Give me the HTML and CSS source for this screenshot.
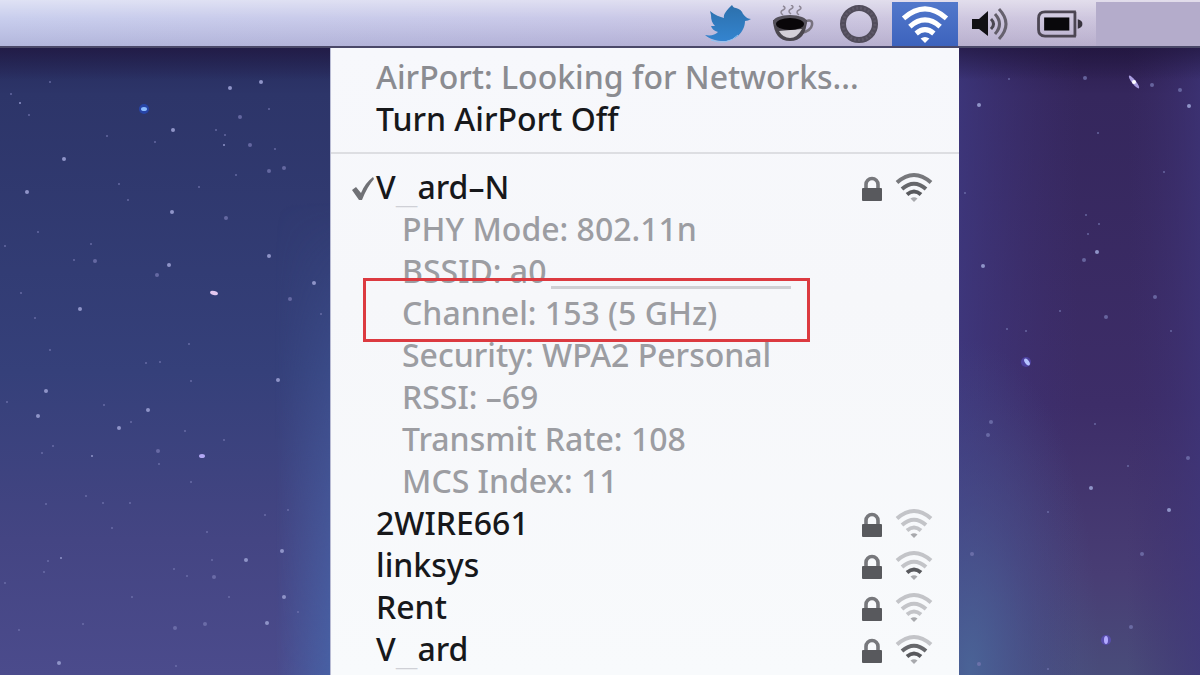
FILE: index.html
```
<!DOCTYPE html>
<html lang="en">
<head>
<meta charset="utf-8">
<title>AirPort menu</title>
<link rel="stylesheet" href="styles.css">
</head>
<body>
<svg class="sky" viewBox="0 0 1200 675" preserveAspectRatio="xMidYMid slice" aria-hidden="true">
  <defs>
    <linearGradient id="left" x1="0" y1="0" x2="0" y2="1"><stop offset="0.07" stop-color="#252a5c"/><stop offset="0.14" stop-color="#2d3569"/><stop offset="0.55" stop-color="#35407a"/><stop offset="0.8" stop-color="#444583"/><stop offset="1" stop-color="#4b4b8c"/></linearGradient>
    <linearGradient id="right" x1="0" y1="0" x2="0" y2="1"><stop offset="0.07" stop-color="#2a1c4c"/><stop offset="0.14" stop-color="#35275d"/><stop offset="0.6" stop-color="#3d2d68"/><stop offset="0.85" stop-color="#483d74"/><stop offset="1" stop-color="#494c7a"/></linearGradient>
    <linearGradient id="edge" x1="0" y1="0" x2="1" y2="0"><stop offset="0" stop-color="#4764a8" stop-opacity="0"/><stop offset="1" stop-color="#4764a8"/></linearGradient>
    <linearGradient id="blue" x1="0" y1="0" x2="1" y2="0"><stop offset="0" stop-color="#3f3b85" stop-opacity="0.7"/><stop offset="0.5" stop-color="#3f3176" stop-opacity="0"/><stop offset="0.7" stop-color="#3c2d6c" stop-opacity="0"/><stop offset="1" stop-color="#3e357a" stop-opacity="0.7"/></linearGradient>
    <linearGradient id="shade" x1="0" y1="0" x2="0" y2="1"><stop offset="0" stop-color="#20153c" stop-opacity="0.7"/><stop offset="1" stop-color="#20153c" stop-opacity="0"/></linearGradient>
    <linearGradient id="fade" x1="0" y1="0" x2="0" y2="1"><stop offset="0.3" stop-color="#000"/><stop offset="1" stop-color="#fff"/></linearGradient>
    <mask id="low"><rect width="1200" height="675" fill="url(#fade)"/></mask>
    <radialGradient id="teal"><stop offset="0" stop-color="#4b6799" stop-opacity="0.9"/><stop offset="0.5" stop-color="#4b5f95" stop-opacity="0.4"/><stop offset="1" stop-color="#4a5a90" stop-opacity="0"/></radialGradient>
  </defs>
  <rect width="640" height="675" fill="url(#left)"/>
  <rect x="640" width="560" height="675" fill="url(#right)"/>
  <rect x="958" width="242" height="675" fill="url(#blue)"/>
  <rect y="46" width="1200" height="34" fill="url(#shade)"/>
  <rect x="275" width="65" height="675" fill="url(#edge)" mask="url(#low)"/>
  <ellipse cx="970" cy="670" rx="130" ry="330" fill="url(#teal)"/>
  <g fill="#7678b2" opacity="0.75">
    <circle cx="11" cy="94" r="1"/><circle cx="29" cy="115" r="1"/><circle cx="50" cy="82" r="1"/><circle cx="107" cy="136" r="1"/><circle cx="155" cy="142" r="1"/><circle cx="216" cy="130" r="1"/><circle cx="225" cy="135" r="1"/><circle cx="250" cy="145" r="2"/><circle cx="240" cy="117" r="2"/><circle cx="269" cy="109" r="1"/><circle cx="275" cy="149" r="1"/><circle cx="269" cy="171" r="2"/><circle cx="284" cy="168" r="2"/><circle cx="236" cy="175" r="1"/><circle cx="199" cy="187" r="1"/><circle cx="119" cy="184" r="1"/><circle cx="128" cy="200" r="1"/><circle cx="226" cy="218" r="2"/><circle cx="38" cy="232" r="1"/><circle cx="5" cy="246" r="1"/><circle cx="91" cy="244" r="1"/><circle cx="74" cy="260" r="1"/><circle cx="95" cy="261" r="2"/><circle cx="157" cy="275" r="2"/><circle cx="21" cy="293" r="1"/><circle cx="35" cy="318" r="1"/><circle cx="290" cy="299" r="2"/><circle cx="321" cy="314" r="1"/><circle cx="189" cy="344" r="1"/><circle cx="160" cy="362" r="1"/><circle cx="50" cy="350" r="1"/><circle cx="146" cy="363" r="1"/><circle cx="191" cy="381" r="1"/><circle cx="104" cy="405" r="1"/><circle cx="185" cy="431" r="1"/><circle cx="224" cy="440" r="1"/><circle cx="131" cy="422" r="1"/><circle cx="7" cy="402" r="1"/><circle cx="53" cy="446" r="1"/><circle cx="42" cy="453" r="1"/><circle cx="158" cy="451" r="2"/><circle cx="159" cy="464" r="1"/><circle cx="191" cy="482" r="1"/><circle cx="86" cy="496" r="1"/><circle cx="103" cy="503" r="1"/><circle cx="130" cy="503" r="1"/><circle cx="46" cy="504" r="1"/><circle cx="112" cy="528" r="1"/><circle cx="207" cy="532" r="1"/><circle cx="265" cy="515" r="1"/><circle cx="288" cy="510" r="1"/><circle cx="48" cy="561" r="1"/><circle cx="44" cy="572" r="1"/><circle cx="212" cy="560" r="1"/><circle cx="174" cy="569" r="1"/><circle cx="187" cy="576" r="1"/><circle cx="214" cy="577" r="2"/><circle cx="5" cy="583" r="1"/><circle cx="132" cy="597" r="1"/><circle cx="229" cy="597" r="1"/><circle cx="83" cy="624" r="1"/><circle cx="175" cy="628" r="2"/><circle cx="205" cy="624" r="2"/><circle cx="19" cy="630" r="1"/><circle cx="298" cy="612" r="1"/><circle cx="176" cy="666" r="1"/>
    <circle cx="1009" cy="79" r="1"/><circle cx="1085" cy="78" r="2"/><circle cx="1152" cy="85" r="2"/><circle cx="1180" cy="90" r="2"/><circle cx="1098" cy="133" r="1"/><circle cx="1164" cy="172" r="1"/><circle cx="965" cy="193" r="1"/><circle cx="1086" cy="215" r="1"/><circle cx="1099" cy="224" r="1"/><circle cx="1088" cy="234" r="1"/><circle cx="1084" cy="260" r="2"/><circle cx="1155" cy="297" r="2"/><circle cx="1106" cy="317" r="2"/><circle cx="1060" cy="311" r="1"/><circle cx="1007" cy="329" r="1"/><circle cx="1026" cy="331" r="1"/><circle cx="1171" cy="331" r="1"/><circle cx="991" cy="422" r="2"/><circle cx="988" cy="435" r="2"/><circle cx="1095" cy="424" r="1"/><circle cx="1128" cy="466" r="1"/><circle cx="1188" cy="458" r="2"/><circle cx="1048" cy="512" r="1"/><circle cx="972" cy="554" r="2"/><circle cx="1142" cy="554" r="2"/><circle cx="1131" cy="627" r="2"/><circle cx="979" cy="664" r="2"/><circle cx="1048" cy="669" r="1"/>
  </g>
  <g fill="#8f94c8">
    <circle cx="20" cy="103" r="1"/><circle cx="173" cy="130" r="2"/><circle cx="230" cy="88" r="2"/><circle cx="261" cy="82" r="2"/><circle cx="224" cy="145" r="1"/><circle cx="64" cy="159" r="2"/><circle cx="27" cy="192" r="2"/><circle cx="172" cy="212" r="2"/><circle cx="169" cy="265" r="2"/><circle cx="269" cy="256" r="2"/><circle cx="314" cy="283" r="2"/><circle cx="80" cy="309" r="2"/><circle cx="278" cy="380" r="2"/><circle cx="46" cy="391" r="2"/><circle cx="38" cy="416" r="2"/><circle cx="148" cy="410" r="2"/><circle cx="119" cy="428" r="2"/><circle cx="92" cy="456" r="1"/><circle cx="61" cy="558" r="1"/><circle cx="246" cy="560" r="2"/><circle cx="282" cy="551" r="2"/><circle cx="284" cy="597" r="2"/><circle cx="267" cy="623" r="2"/><circle cx="59" cy="663" r="2"/>
    <circle cx="979" cy="105" r="2"/><circle cx="1189" cy="106" r="2"/><circle cx="983" cy="266" r="2"/><circle cx="1097" cy="252" r="2"/><circle cx="1091" cy="488" r="2"/><circle cx="1169" cy="510" r="2"/>
  </g>
  <circle cx="144" cy="109" r="5" fill="#2549b5" opacity="0.8"/><ellipse cx="144" cy="109" rx="3" ry="2" fill="#8bbcff"/>
  <ellipse cx="214" cy="293" rx="4" ry="2" fill="#e3c7ee" transform="rotate(15 214 293)"/>
  <ellipse cx="202" cy="456" rx="3" ry="2" fill="#b3a8f4"/>
  <ellipse cx="1134" cy="82" rx="8" ry="2" fill="#a99de0" transform="rotate(52 1134 82)"/><circle cx="1134" cy="82" r="2" fill="#fff"/>
  <circle cx="1026" cy="362" r="5" fill="#594fc0" opacity="0.6"/><ellipse cx="1027" cy="362" rx="4" ry="2" fill="#b5c3ff" transform="rotate(55 1027 362)"/>
  <circle cx="1106" cy="640" r="5" fill="#6252d0" opacity="0.6"/><ellipse cx="1106" cy="640" rx="2" ry="4" fill="#b2aaff"/>
</svg>

<svg class="symbols" aria-hidden="true">
  <symbol id="lock" viewBox="0 0 20 26"><path d="M4 13V8.500a6 6 0 0 1 12 0V13" fill="none" stroke="#77787c" stroke-width="3.600"/><rect x="0" y="12" width="20" height="13" rx="1" fill="#58595d"/></symbol>
  <symbol id="wifi" viewBox="0 0 38 30"><g fill="none" stroke-width="4"><path class="far" d="M2 10.500Q19-4.500 36 10.500"/><path class="mid" d="M7 17Q19 6.500 31 17"/><path class="near" d="M12 22.500Q19 16.500 26 22.500"/></g><path class="dot" d="M19 30l-3.500-3.500q3.500-2.500 7 0z"/></symbol>
</svg>

<header class="menubar">
  <button class="status" aria-label="Twitter"><svg width="48" height="40" viewBox="0 0 48 40"><defs><linearGradient id="bird" x1="0" y1="0" x2="0" y2="1"><stop offset="0" stop-color="#2c70ac"/><stop offset="1" stop-color="#3484cf"/></linearGradient></defs><path d="M2 31c6 1 10 0 13-3-4-1-6-3-7-6h4c-3-3-4-6-4-11l-1-4c5 4 10 6 14 7-1-4 3-8 8-13 1 2 2 3 4 3 4 1 6 3 7 6 2 2 4 5 8 5-2 1-4 2-6 2 0 11-10 20-21 20-8 0-14-2-19-6z" fill="url(#bird)"/><path d="M8 36q16 6 27-5" fill="none" stroke="#8fc3f4" stroke-width="1"/></svg></button>
  <button class="status" aria-label="Caffeine"><svg width="44" height="38" viewBox="0 0 44 38"><g fill="none" stroke="#8d8795" stroke-width="1.500"><path d="M12 10q-4-3 0-5t0-4M20 9q-4-3 0-5t0-4M28 10q-4-3 0-5t0-4"/></g><path d="M35 16q7-2 6 4t-11 8" fill="none" stroke="#77727e" stroke-width="2.500"/><path d="M2 15q1 21 17 21T36 15z" fill="#4b474f"/><path d="M8 26q4 7 11 7t12-9z" fill="#d4d0d8"/><ellipse cx="19" cy="17" rx="17" ry="7" fill="#55515b"/><ellipse cx="19" cy="19" rx="14" ry="6" fill="#090609"/></svg></button>
  <button class="status" aria-label="Sync"><svg width="40" height="40" viewBox="0 0 40 40"><circle cx="20" cy="20" r="16" fill="none" stroke="#514c5b" stroke-width="6"/><circle cx="20" cy="20" r="16" fill="none" stroke="#5e5868" stroke-width="3" stroke-dasharray="2 2"/></svg></button>
  <button class="status status-open" aria-label="AirPort" aria-expanded="true"><svg class="signal white" width="48" height="38"><use href="#wifi"/></svg></button>
  <button class="status" aria-label="Volume"><svg width="40" height="36" viewBox="0 0 40 36"><path d="M1 13h7l9-8v25l-9-7H1z" fill="#111014"/><g fill="none" stroke-width="3"><path d="M20 13q5 5 0 10" stroke="#4b4751"/><path d="M24 8q9 10 0 20" stroke="#625d69"/><path d="M28 3q14 15 0 30" stroke="#66616e"/></g></svg></button>
  <button class="status battery" aria-label="Battery"><svg width="48" height="28" viewBox="0 0 50 30"><path d="M42 2H9Q2 2 2 9v12q0 7 7 7h33M41 2v26" fill="none" stroke="#4c4653" stroke-width="3"/><rect x="8" y="8" width="27" height="14" fill="#09080b"/><path d="M44 10q5 1 5 5t-5 5z" fill="#38333e"/></svg></button>
  <div class="blank"></div>
</header>

<main class="desktop">
  <nav class="menu" aria-label="AirPort menu">
    <p class="row info">AirPort: Looking for Networks...</p>
    <button class="row">Turn AirPort Off</button>
    <hr>
    <button class="row"><svg class="check" width="24" height="26" viewBox="0 0 24 26"><path d="M1 15l4-3 5 6Q14 8 22 2l1 2q-7 8-12 21H8z" fill="#707176"/></svg><span class="name">V<span class="under">_</span>ard–N</span><svg class="lock" width="20" height="26"><use href="#lock"/></svg><svg class="signal s3" width="38" height="30"><use href="#wifi"/></svg></button>
    <p class="row detail">PHY Mode: 802.11n</p>
    <p class="row detail">BSSID: a0<span class="mask"></span></p>
    <p class="row detail marked">Channel: 153 (5 GHz)</p>
    <p class="row detail">Security: WPA2 Personal</p>
    <p class="row detail">RSSI: –69</p>
    <p class="row detail">Transmit Rate: 108</p>
    <p class="row detail">MCS Index: 11</p>
    <button class="row"><span class="name">2WIRE661</span><svg class="lock" width="20" height="26"><use href="#lock"/></svg><svg class="signal s0" width="38" height="30"><use href="#wifi"/></svg></button>
    <button class="row"><span class="name">linksys</span><svg class="lock" width="20" height="26"><use href="#lock"/></svg><svg class="signal s1" width="38" height="30"><use href="#wifi"/></svg></button>
    <button class="row"><span class="name">Rent</span><svg class="lock" width="20" height="26"><use href="#lock"/></svg><svg class="signal s0" width="38" height="30"><use href="#wifi"/></svg></button>
    <button class="row"><span class="name">V<span class="under">_</span>ard</span><svg class="lock" width="20" height="26"><use href="#lock"/></svg><svg class="signal s2" width="38" height="30"><use href="#wifi"/></svg></button>
  </nav>
</main>
</body>
</html>
```
FILE: styles.css
```
* { box-sizing: border-box; }

body {
  margin: 0;
  min-height: 100vh;
  display: flex;
  flex-direction: column;
  overflow: hidden;
  background: #303a72;
  font-family: "Noto Sans", "Open Sans", sans-serif;
  color: #17181b;
}

.sky {
  position: fixed;
  inset: 0;
  width: 100%;
  height: 100%;
  z-index: -1;
}

.symbols { position: absolute; width: 0; height: 0; }

.menubar {
  display: flex;
  justify-content: flex-end;
  height: 48px;
  padding-top: 2px;
  border-bottom: 2px solid #4a4868;
  background:
    linear-gradient(rgba(255, 255, 255, 0.5), rgba(255, 255, 255, 0.15) 40%, rgba(90, 80, 120, 0.12)),
    linear-gradient(90deg, #bfc5ea, #c0bfe4 50%, #c5bdda 75%, #c6bcd8);
}

.status {
  display: flex;
  align-items: center;
  justify-content: center;
  width: 66px;
  padding: 0;
  border: 0;
  background: none;
}

.status-open { background: linear-gradient(#5278cb, #3d63bd); }
.battery { width: 72px; }
.blank { width: 104px; background: #b4accb; }

.desktop {
  flex: 1;
  display: flex;
  justify-content: flex-end;
  padding-right: 241px;
}

.menu {
  width: 629px;
  padding-top: 8px;
  border-left: 1px solid #b9bcd4;
  background: linear-gradient(#f7f8fc, #f6f7fa 40%, #f8fafc);
}

.menu hr {
  height: 2px;
  margin: 12px 0;
  border: 0;
  background: #dddee2;
}

.row {
  position: relative;
  display: flex;
  align-items: center;
  width: 100%;
  height: 42px;
  margin: 0;
  padding: 0 26px 0 45px;
  border: 0;
  background: none;
  color: inherit;
  font: 500 32px/42px "Noto Sans", "Open Sans", sans-serif;
  text-align: left;
  white-space: nowrap;
}

.info { color: #8b8c91; }
.detail { padding-left: 71px; color: #9c9da2; }
.name { flex: 1; }

.under {
  color: #cfd0d6;
  font: 36px/1px "DejaVu Sans Mono", monospace;
}

.check { position: absolute; left: 20px; top: 9px; }

.lock { margin: 3px 13px 0 0; }

.mask {
  align-self: flex-end;
  width: 240px;
  height: 3px;
  margin: 0 0 3px 5px;
  background: #cfcfd3;
}

.marked::after {
  content: "";
  position: absolute;
  inset: -14px 149px -8px 32px;
  border: 3px solid #dc3a40;
}

.signal { stroke: #c3c4c8; fill: #a8a9ad; }
.s1, .s2, .s3 { --near: #58595d; }
.s2, .s3 { --mid: #66676b; }
.s3 { --far: #77787c; }
.near { stroke: var(--near, #c3c4c8); }
.mid { stroke: var(--mid, #c3c4c8); }
.far { stroke: var(--far, #c3c4c8); }
.dot { stroke: none; }

.white { --near: #fff; --mid: #fff; --far: #fff; fill: #fff; }
```
